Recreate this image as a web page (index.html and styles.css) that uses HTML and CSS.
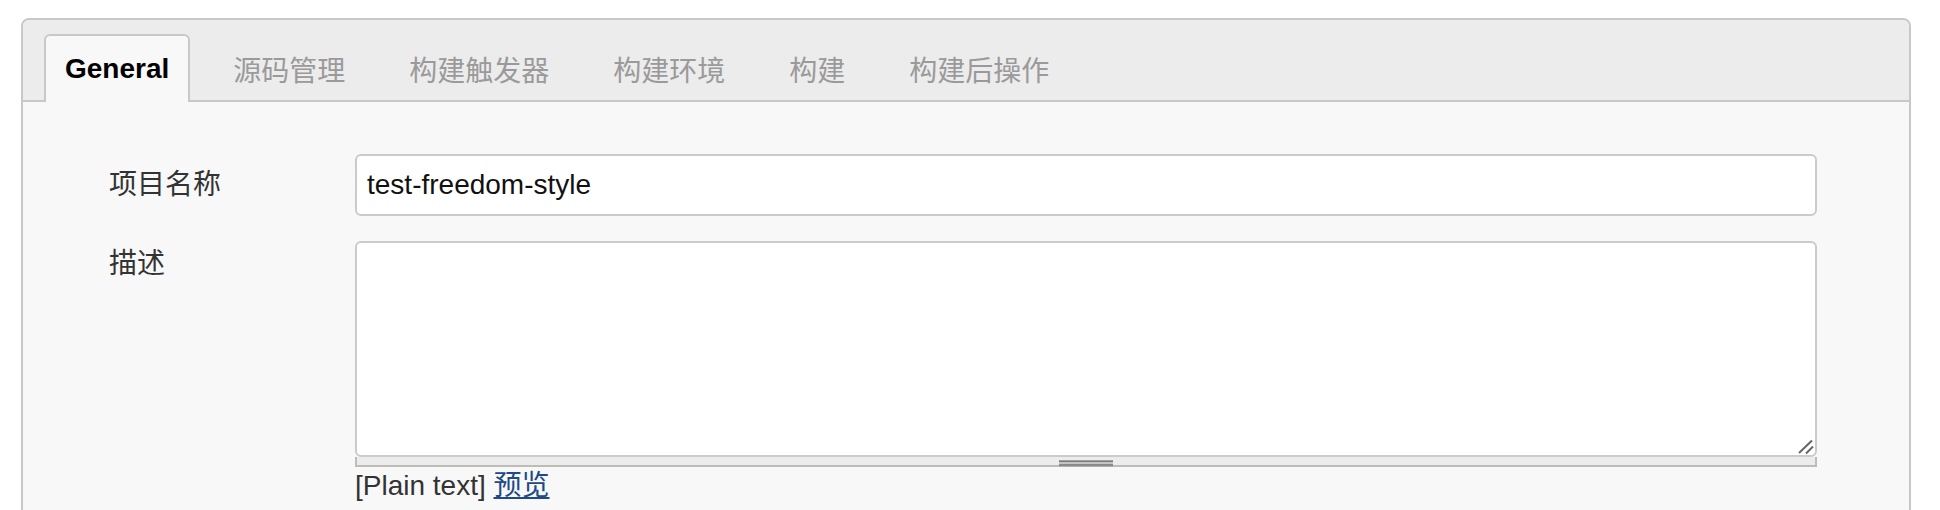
FILE: index.html
```html
<!DOCTYPE html>
<html lang="zh">
<head>
<meta charset="utf-8">
<title>General</title>
<link rel="stylesheet" href="styles.css">
</head>
<body>
<div class="panel">
  <div class="tabbar">
    <div class="tab tab-active">General</div>
    <div class="tab">源码管理</div>
    <div class="tab">构建触发器</div>
    <div class="tab">构建环境</div>
    <div class="tab">构建</div>
    <div class="tab">构建后操作</div>
  </div>
  <div class="content">
    <div class="label label-name">项目名称</div>
    <div class="field">
      <input class="text-input" type="text" value="test-freedom-style">
    </div>
    <div class="label label-desc">描述</div>
    <div class="field">
      <div class="textarea-wrap">
        <textarea class="textarea"></textarea>
        <svg class="resizer" width="18" height="18" viewBox="0 0 18 18">
          <line x1="15" y1="3.5" x2="2" y2="16" stroke="#666" stroke-width="2"/>
          <line x1="16" y1="9.5" x2="9" y2="16.5" stroke="#666" stroke-width="2"/>
        </svg>
      </div>
      <div class="grip-bar"><span class="grip"></span></div>
      <div class="help">[Plain text] <a class="link" href="#">预览</a></div>
    </div>
  </div>
</div>
</body>
</html>
```

FILE: styles.css
```css
html, body {
  margin: 0;
  padding: 0;
  background: #ffffff;
  overflow: hidden;
}

body {
  font-family: "Liberation Sans", Arial, "Noto Sans CJK SC", sans-serif;
  color: #333333;
}

.panel {
  margin: 18px 29px 0 21px;
  border: 2px solid #c8c8c8;
  border-radius: 8px 8px 0 0;
  background: #f8f8f8;
  min-height: 620px;
}

.tabbar {
  display: flex;
  align-items: flex-end;
  padding: 14px 0 0 21px;
  height: 66px;
  background: #ececec;
  border-bottom: 2px solid #c8c8c8;
  border-radius: 6px 6px 0 0;
}

.tab {
  box-sizing: border-box;
  height: 68px;
  margin-bottom: -2px;
  margin-right: 22px;
  padding: 0 19px;
  border: 2px solid transparent;
  border-bottom: 0;
  display: flex;
  align-items: center;
  font-family: "Noto Sans CJK SC", sans-serif;
  font-size: 28px;
  line-height: 28px;
  color: #9a9a9a;
  white-space: nowrap;
}

.tab-active {
  font-family: "Liberation Sans", Arial, sans-serif;
  font-weight: bold;
  color: #000000;
  background: #f8f8f8;
  border-color: #c8c8c8;
  border-radius: 6px 6px 0 0;
}

.content {
  display: grid;
  grid-template-columns: 246px 1fr;
  row-gap: 25px;
  padding: 52px 92px 0 86px;
}

.label {
  font-family: "Noto Sans CJK SC", sans-serif;
  font-size: 28px;
  line-height: 40px;
  color: #333333;
}

.label-name {
  padding-top: 8px;
}

.label-desc {
  padding-top: 0;
}

.field {
  min-width: 0;
}

.text-input {
  display: block;
  box-sizing: border-box;
  width: 100%;
  height: 62px;
  margin: 0;
  padding: 0 10px;
  border: 2px solid #cbcbcb;
  border-radius: 6px;
  background: #ffffff;
  font-family: "Liberation Sans", Arial, sans-serif;
  font-size: 28px;
  color: #111111;
  outline: none;
}

.textarea-wrap {
  position: relative;
}

.textarea {
  display: block;
  box-sizing: border-box;
  width: 100%;
  height: 216px;
  margin: 0;
  border: 2px solid #cbcbcb;
  border-radius: 6px;
  background: #ffffff;
  resize: none;
  outline: none;
}

.resizer {
  position: absolute;
  right: 2px;
  bottom: 2px;
}

.grip-bar {
  box-sizing: border-box;
  height: 10px;
  background: #ececec;
  border: 2px solid #bdbdb5;
  border-top: 0;
  display: flex;
  justify-content: center;
  align-items: flex-end;
}

.grip {
  display: block;
  width: 54px;
  height: 7px;
  margin-bottom: -2px;
  background: linear-gradient(to bottom,
    #a0a0a0 0, #a0a0a0 1px,
    #7a7a7a 1px, #7a7a7a 2px,
    #c4c4c4 2px, #c4c4c4 4px,
    #8a8a8a 4px, #8a8a8a 6px,
    #b0b0a8 6px, #b0b0a8 7px);
}

.help {
  margin-top: 0;
  font-size: 28px;
  line-height: 32px;
  color: #333333;
}

.link {
  color: #204a87;
  text-decoration: underline;
  font-family: "Noto Sans CJK SC", sans-serif;
}
```
